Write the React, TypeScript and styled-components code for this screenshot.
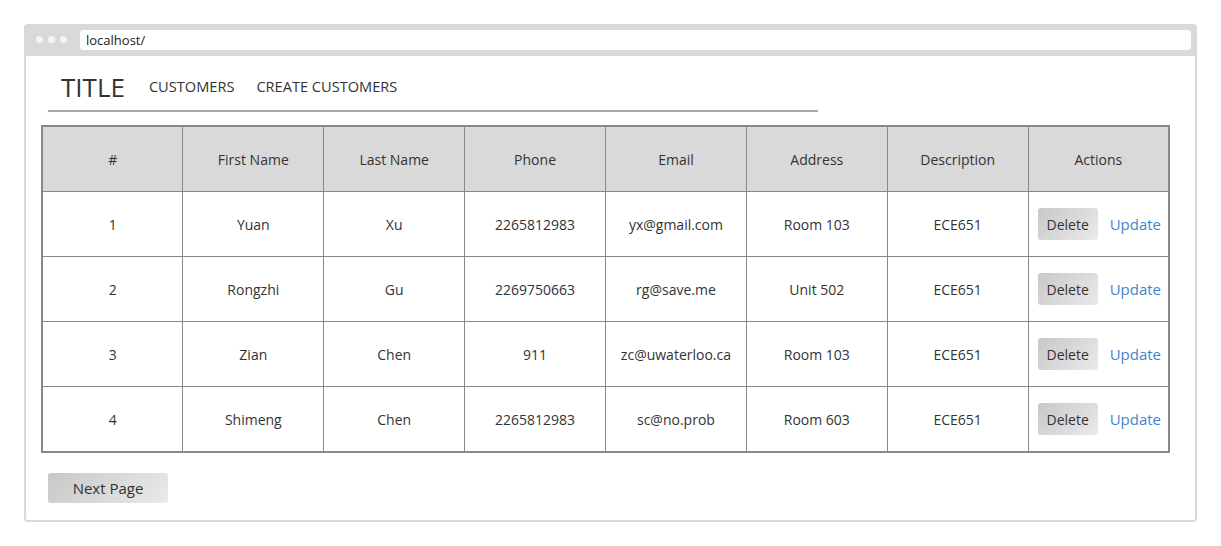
import React from "react";
import styled, { createGlobalStyle } from "styled-components";

const GlobalStyle = createGlobalStyle`
  html, body {
    margin: 0;
    padding: 0;
    background: #ffffff;
  }
  body {
    font-family: "Open Sans", "Noto Sans", Arial, sans-serif;
    color: #333333;
  }
`;

interface Customer {
  id: number;
  firstName: string;
  lastName: string;
  phone: string;
  email: string;
  address: string;
  description: string;
}

const customers: Customer[] = [
  { id: 1, firstName: "Yuan", lastName: "Xu", phone: "2265812983", email: "yx@gmail.com", address: "Room 103", description: "ECE651" },
  { id: 2, firstName: "Rongzhi", lastName: "Gu", phone: "2269750663", email: "rg@save.me", address: "Unit 502", description: "ECE651" },
  { id: 3, firstName: "Zian", lastName: "Chen", phone: "911", email: "zc@uwaterloo.ca", address: "Room 103", description: "ECE651" },
  { id: 4, firstName: "Shimeng", lastName: "Chen", phone: "2265812983", email: "sc@no.prob", address: "Room 603", description: "ECE651" },
];

const columns = ["#", "First Name", "Last Name", "Phone", "Email", "Address", "Description", "Actions"];

export default function App() {
  return (
    <>
      <GlobalStyle />
      <Frame>
        <TopBar>
          <Dots>
            <Dot />
            <Dot />
            <Dot />
          </Dots>
          <UrlField>localhost/</UrlField>
        </TopBar>
        <Content>
          <Nav>
            <Title>TITLE</Title>
            <NavLink>CUSTOMERS</NavLink>
            <NavLink>CREATE CUSTOMERS</NavLink>
          </Nav>
          <Table>
            <thead>
              <tr>
                {columns.map((c) => (
                  <Th key={c}>{c}</Th>
                ))}
              </tr>
            </thead>
            <tbody>
              {customers.map((c) => (
                <tr key={c.id}>
                  <Td>{c.id}</Td>
                  <Td>{c.firstName}</Td>
                  <Td>{c.lastName}</Td>
                  <Td>{c.phone}</Td>
                  <Td>{c.email}</Td>
                  <Td>{c.address}</Td>
                  <Td>{c.description}</Td>
                  <Td>
                    <Actions>
                      <GrayButton>Delete</GrayButton>
                      <LinkButton>Update</LinkButton>
                    </Actions>
                  </Td>
                </tr>
              ))}
            </tbody>
          </Table>
          <Footer>
            <GrayButton $wide>Next Page</GrayButton>
          </Footer>
        </Content>
      </Frame>
    </>
  );
}

const Frame = styled.div`
  margin: 24px 0 0 24px;
  width: 1173px;
  height: 498px;
  display: flex;
  flex-direction: column;
  box-sizing: border-box;
`;

const TopBar = styled.div`
  height: 32px;
  background: #d9d9d9;
  border-radius: 4px 4px 0 0;
  display: flex;
  align-items: flex-start;
  padding: 6px 6px 0 12px;
  box-sizing: border-box;
`;

const Dots = styled.div`
  display: flex;
  gap: 5px;
  margin-top: 6px;
  width: 44px;
`;

const Dot = styled.span`
  width: 7px;
  height: 7px;
  border-radius: 50%;
  background: #f4f4f4;
`;

const UrlField = styled.div`
  flex: 1;
  height: 20px;
  background: #ffffff;
  border-radius: 3px;
  padding-left: 6px;
  font-size: 13px;
  line-height: 20px;
  color: #222222;
`;

const Content = styled.div`
  flex: 1;
  border: 2px solid #d9d9d9;
  border-top: none;
  border-radius: 0 0 4px 4px;
  padding: 0 0 0 15px;
  box-sizing: border-box;
`;

const Nav = styled.div`
  margin-left: 7px;
  width: 770px;
  height: 56px;
  display: flex;
  align-items: center;
  gap: 22px;
  padding: 6px 0 0 13px;
  box-sizing: border-box;
  border-bottom: 2px solid #aaaaaa;
  margin-bottom: 13px;
`;

const Title = styled.span`
  font-size: 26px;
  color: #333333;
  margin-right: 2px;
  line-height: 1;
  padding-top: 2px;
`;

const NavLink = styled.span`
  font-size: 14.6px;
  color: #333333;
`;

const Table = styled.table`
  width: 1129px;
  table-layout: fixed;
  border-collapse: collapse;
  border: 2px solid #888888;
`;

const Th = styled.th`
  height: 64px;
  padding: 0;
  background: #d9d9d9;
  border: 1px solid #888888;
  font-weight: normal;
  font-size: 14px;
  color: #333333;
  text-align: center;
`;

const Td = styled.td`
  height: 64px;
  padding: 0;
  border: 1px solid #888888;
  font-size: 14px;
  color: #333333;
  text-align: center;
`;

const Actions = styled.div`
  display: flex;
  align-items: center;
  gap: 12px;
  padding-left: 9px;
`;

const GrayButton = styled.button<{ $wide?: boolean }>`
  width: ${({ $wide }) => ($wide ? "120px" : "60px")};
  height: ${({ $wide }) => ($wide ? "30px" : "32px")};
  border: none;
  border-radius: 3px;
  background: linear-gradient(135deg, #c8c8c8, #eaeaea);
  font-family: inherit;
  font-size: ${({ $wide }) => ($wide ? "15px" : "14px")};
  color: #333333;
  padding: 0;
  cursor: pointer;
`;

const LinkButton = styled.span`
  font-size: 15px;
  color: #3f85cd;
  cursor: pointer;
`;

const Footer = styled.div`
  padding: 20px 0 0 7px;
`;
